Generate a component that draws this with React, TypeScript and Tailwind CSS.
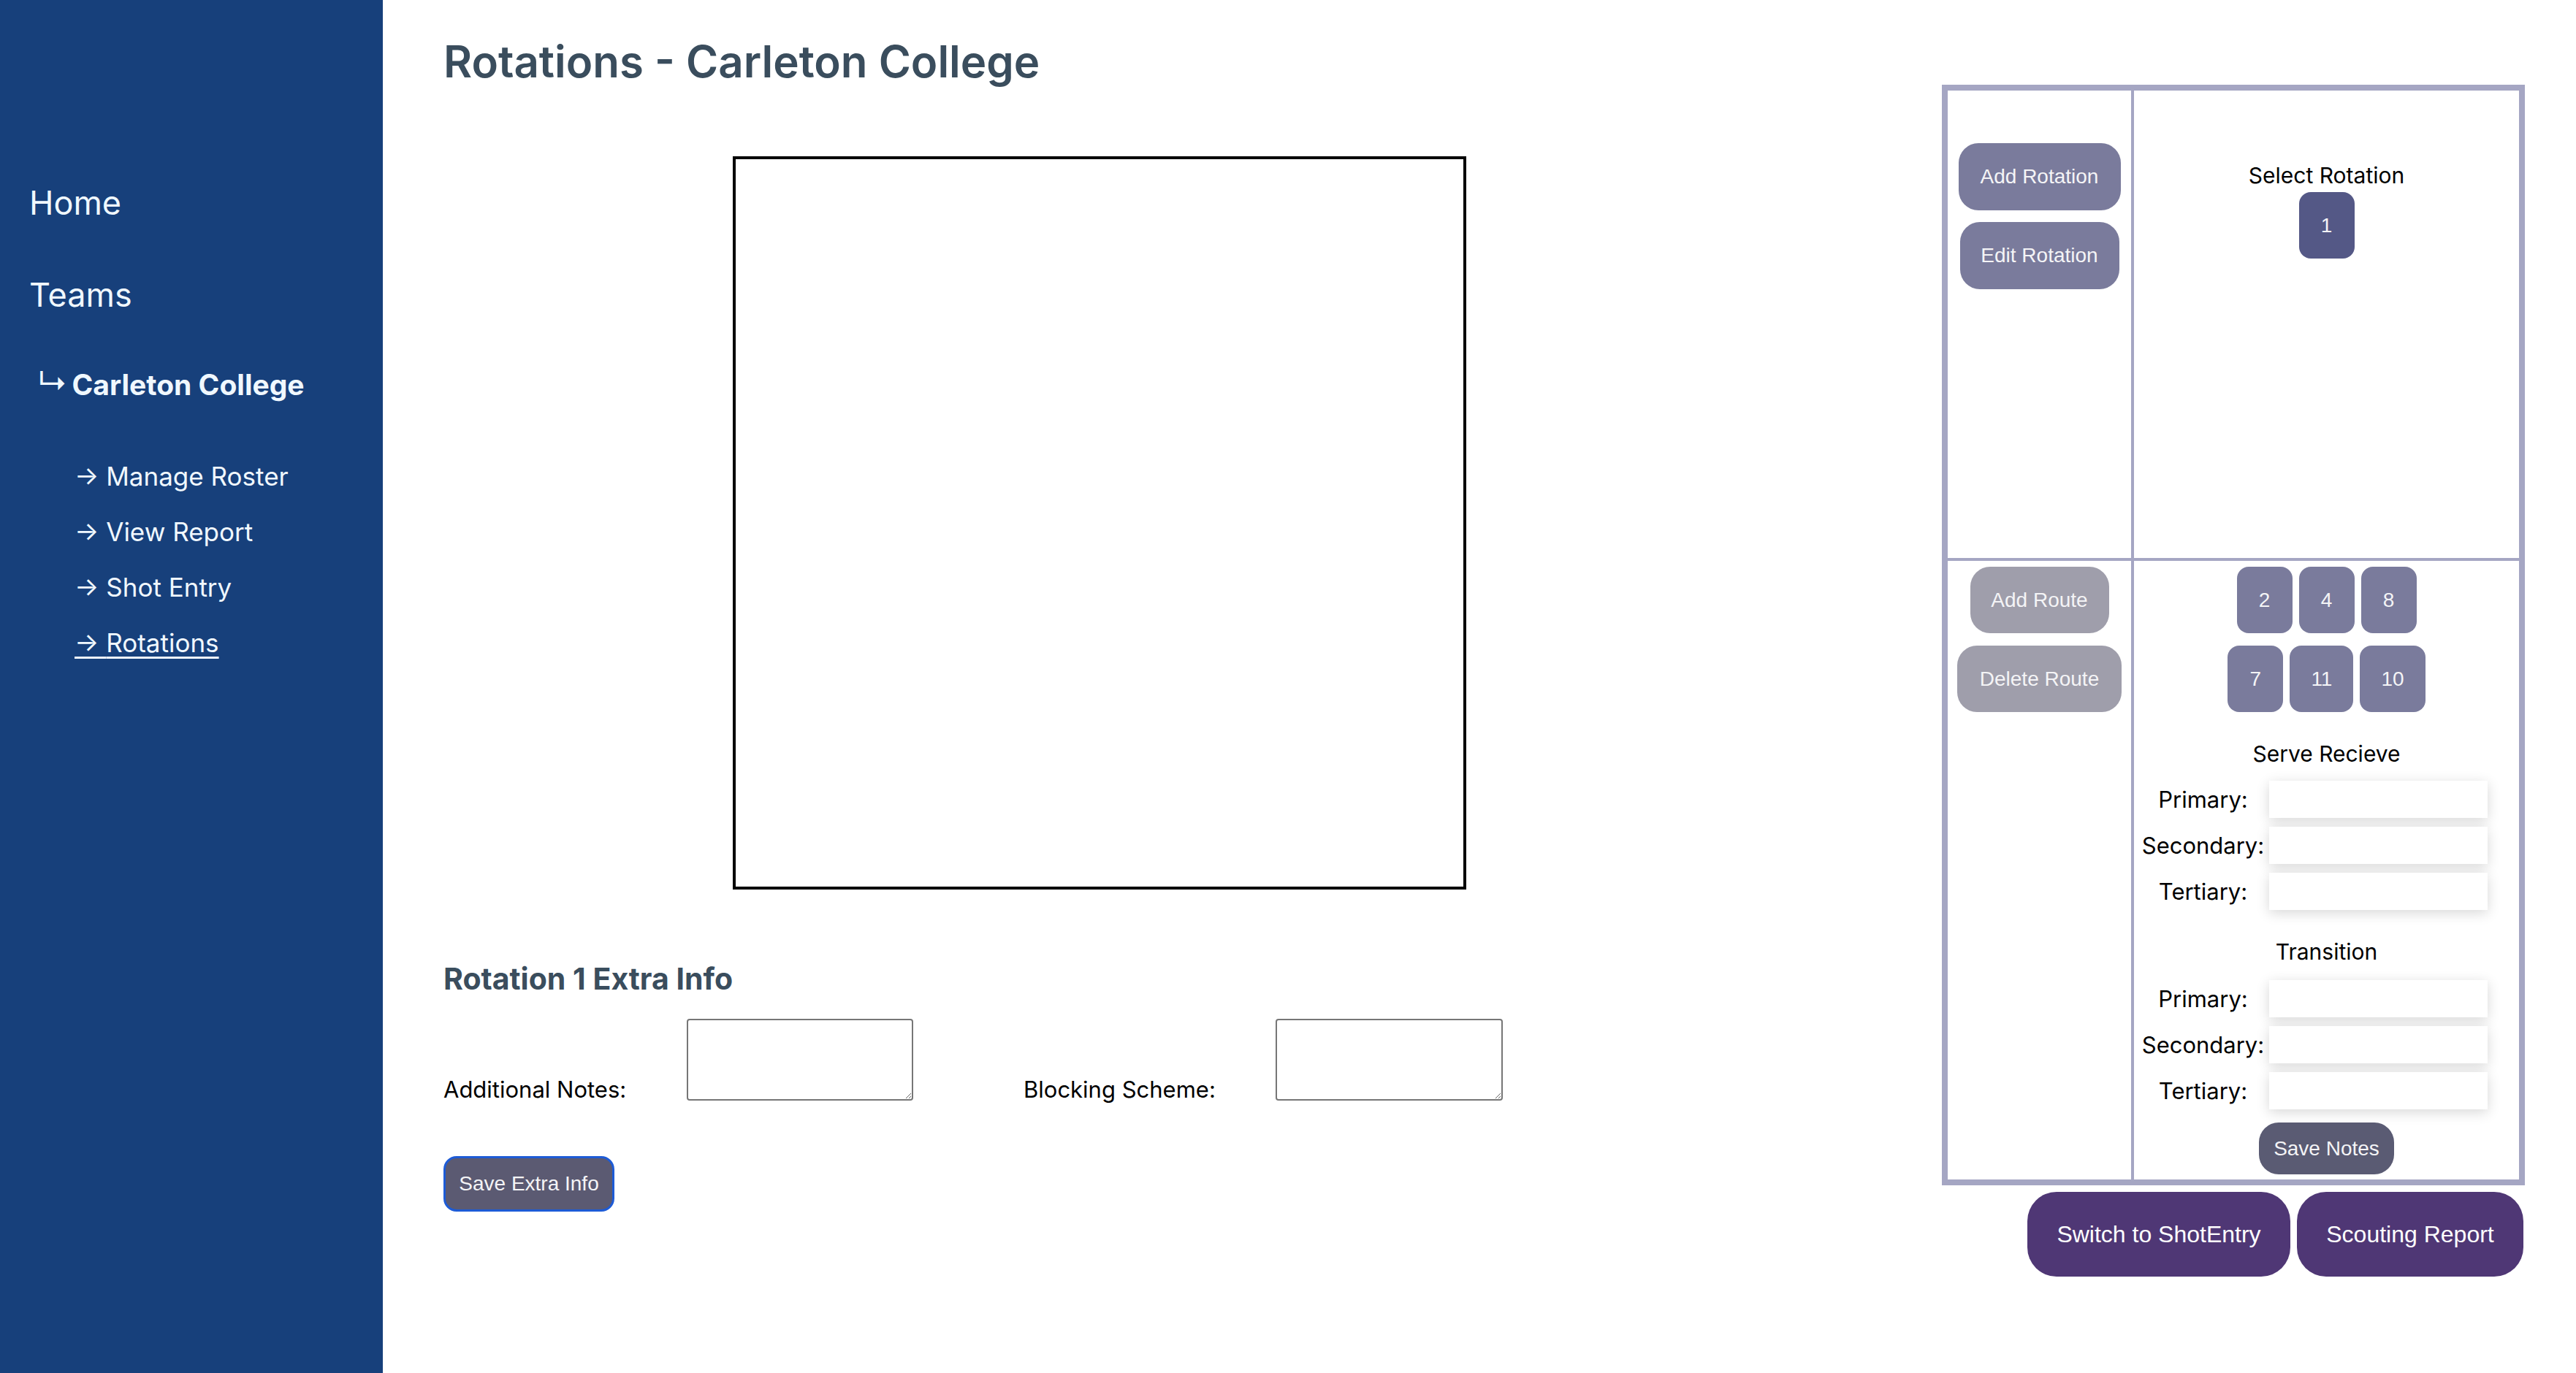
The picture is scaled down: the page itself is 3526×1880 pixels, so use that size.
import React from "react";

const sans = { fontFamily: "Inter, 'Noto Sans', sans-serif" };
const arial = { fontFamily: "'Liberation Sans', Arial, sans-serif" };

const SubLink = ({ label, active }: { label: string; active?: boolean }) => (
  <a
    href="#"
    className={`block text-[35px] leading-none text-[#f0f8ff] ${active ? "underline decoration-[3px] underline-offset-[6px]" : "no-underline"}`}
  >
    → {label}
  </a>
);

const Sidebar = () => (
  <div className="h-[1880px] w-[524px] shrink-0 bg-[#17407b] pl-[40px] pt-[255px]" style={sans}>
    <a href="#" className="block text-[45px] leading-none text-[#f0f8ff]">
      Home
    </a>
    <a href="#" className="mt-[81px] block text-[45px] leading-none text-[#f0f8ff]">
      Teams
    </a>
    <div className="mt-[81px] flex items-center pl-[11px] text-[39px] font-bold leading-none text-[#f0f8ff]">
      <span className="mr-[6px] -mt-[6px] text-[42px] font-normal">↳</span>
      Carleton College
    </div>
    <div className="mt-[89px] flex flex-col gap-[41px] pl-[62px]">
      <SubLink label="Manage Roster" />
      <SubLink label="View Report" />
      <SubLink label="Shot Entry" />
      <SubLink label="Rotations" active />
    </div>
  </div>
);

const PanelButton = ({ label, className }: { label: string; className: string }) => (
  <button className={`rounded-[27px] text-[28px] leading-none text-[#f4f4f6] ${className}`} style={arial}>
    {label}
  </button>
);

const NumButton = ({ n, dark }: { n: string; dark?: boolean }) => (
  <button
    className={`h-[91px] min-w-[76px] rounded-[16px] px-[29px] text-[28px] leading-none text-[#f4f4f6] ${dark ? "bg-[#545886]" : "bg-[#7a7b9c]"}`}
    style={arial}
  >
    {n}
  </button>
);

const NoteRows = () => (
  <div className="ml-[4px] flex flex-col gap-[12px]">
    {["Primary:", "Secondary:", "Tertiary:"].map((l) => (
      <div key={l} className="flex items-center">
        <span className="w-[181px] text-center text-[31px] leading-none text-black">{l}</span>
        <input className="h-[51px] w-[299px] bg-white shadow-[0_4px_18px_rgba(0,0,0,0.16)] outline-none" />
      </div>
    ))}
  </div>
);

const RightPanel = () => (
  <div className="mr-[70px] mt-[116px] w-[798px] shrink-0" style={sans}>
    <div className="grid h-[1507px] grid-cols-[255px_1fr] grid-rows-[644px_1fr] border-8 border-[#a5a6c3]">
      <div className="flex flex-col items-center gap-[16px] border-b-4 border-r-4 border-[#a5a6c3] pt-[72px]">
        <PanelButton label="Add Rotation" className="h-[92px] w-[222px] bg-[#7a7b9c]" />
        <PanelButton label="Edit Rotation" className="h-[92px] w-[218px] bg-[#7a7b9c]" />
      </div>
      <div className="flex flex-col items-center border-b-4 border-[#a5a6c3] pt-[101px]">
        <div className="text-[30px] leading-none text-black">Select Rotation</div>
        <div className="mt-[8px]">
          <NumButton n="1" dark />
        </div>
      </div>
      <div className="flex flex-col items-center gap-[17px] border-r-4 border-[#a5a6c3] pt-[8px]">
        <PanelButton label="Add Route" className="h-[91px] w-[190px] bg-[#9f9eab]" />
        <PanelButton label="Delete Route" className="h-[91px] w-[225px] bg-[#9f9eab]" />
      </div>
      <div className="flex flex-col pt-[8px]">
        <div className="flex flex-col items-center gap-[17px]">
          <div className="flex gap-[9px]">
            <NumButton n="2" />
            <NumButton n="4" />
            <NumButton n="8" />
          </div>
          <div className="flex gap-[9px]">
            <NumButton n="7" />
            <NumButton n="11" />
            <NumButton n="10" />
          </div>
        </div>
        <div className="mt-[42px] text-center text-[30px] leading-none text-black">Serve Recieve</div>
        <div className="mt-[22px]">
          <NoteRows />
        </div>
        <div className="mt-[42px] text-center text-[30px] leading-none text-black">Transition</div>
        <div className="mt-[24px]">
          <NoteRows />
        </div>
        <div className="mt-[18px] flex justify-center">
          <PanelButton label="Save Notes" className="h-[71px] w-[185px] rounded-[20px] bg-[#5a5b73]" />
        </div>
      </div>
    </div>
    <div className="mt-[9px] flex justify-end gap-[9px] pr-[2px]">
      <button className="h-[116px] w-[360px] rounded-[40px] bg-[#4f3775] text-[32px] text-white" style={arial}>
        Switch to ShotEntry
      </button>
      <button className="h-[116px] w-[310px] rounded-[40px] bg-[#4f3775] text-[32px] text-white" style={arial}>
        Scouting Report
      </button>
    </div>
  </div>
);

export default function App() {
  return (
    <div className="flex min-h-[1880px] w-full bg-white">
      <Sidebar />
      <div className="flex-1 pl-[83px] pt-[54px]" style={sans}>
        <h1 className="text-[60px] font-semibold leading-none text-[#3a4d5d]">Rotations - Carleton College</h1>
        <div className="ml-[396px] mt-[100px] h-[1004px] w-[1004px] border-4 border-black bg-white" />
        <h2 className="mt-[102px] text-[41px] font-bold leading-none text-[#3a4d5d]">Rotation 1 Extra Info</h2>
        <div className="mt-[34px] flex items-end">
          <label className="w-[333px] text-[31px] leading-none text-black">Additional Notes:</label>
          <textarea className="h-[112px] w-[310px] rounded-[4px] border-2 border-[#767676] bg-white" />
          <label className="ml-[151px] w-[345px] text-[31px] leading-none text-black">Blocking Scheme:</label>
          <textarea className="h-[112px] w-[311px] rounded-[4px] border-2 border-[#767676] bg-white" />
        </div>
        <button
          className="mt-[76px] h-[76px] w-[234px] rounded-[18px] border-[3px] border-[#1d5bd6] bg-[#5b5a72] text-[28px] text-[#f4f4f6]"
          style={arial}
        >
          Save Extra Info
        </button>
      </div>
      <RightPanel />
    </div>
  );
}
